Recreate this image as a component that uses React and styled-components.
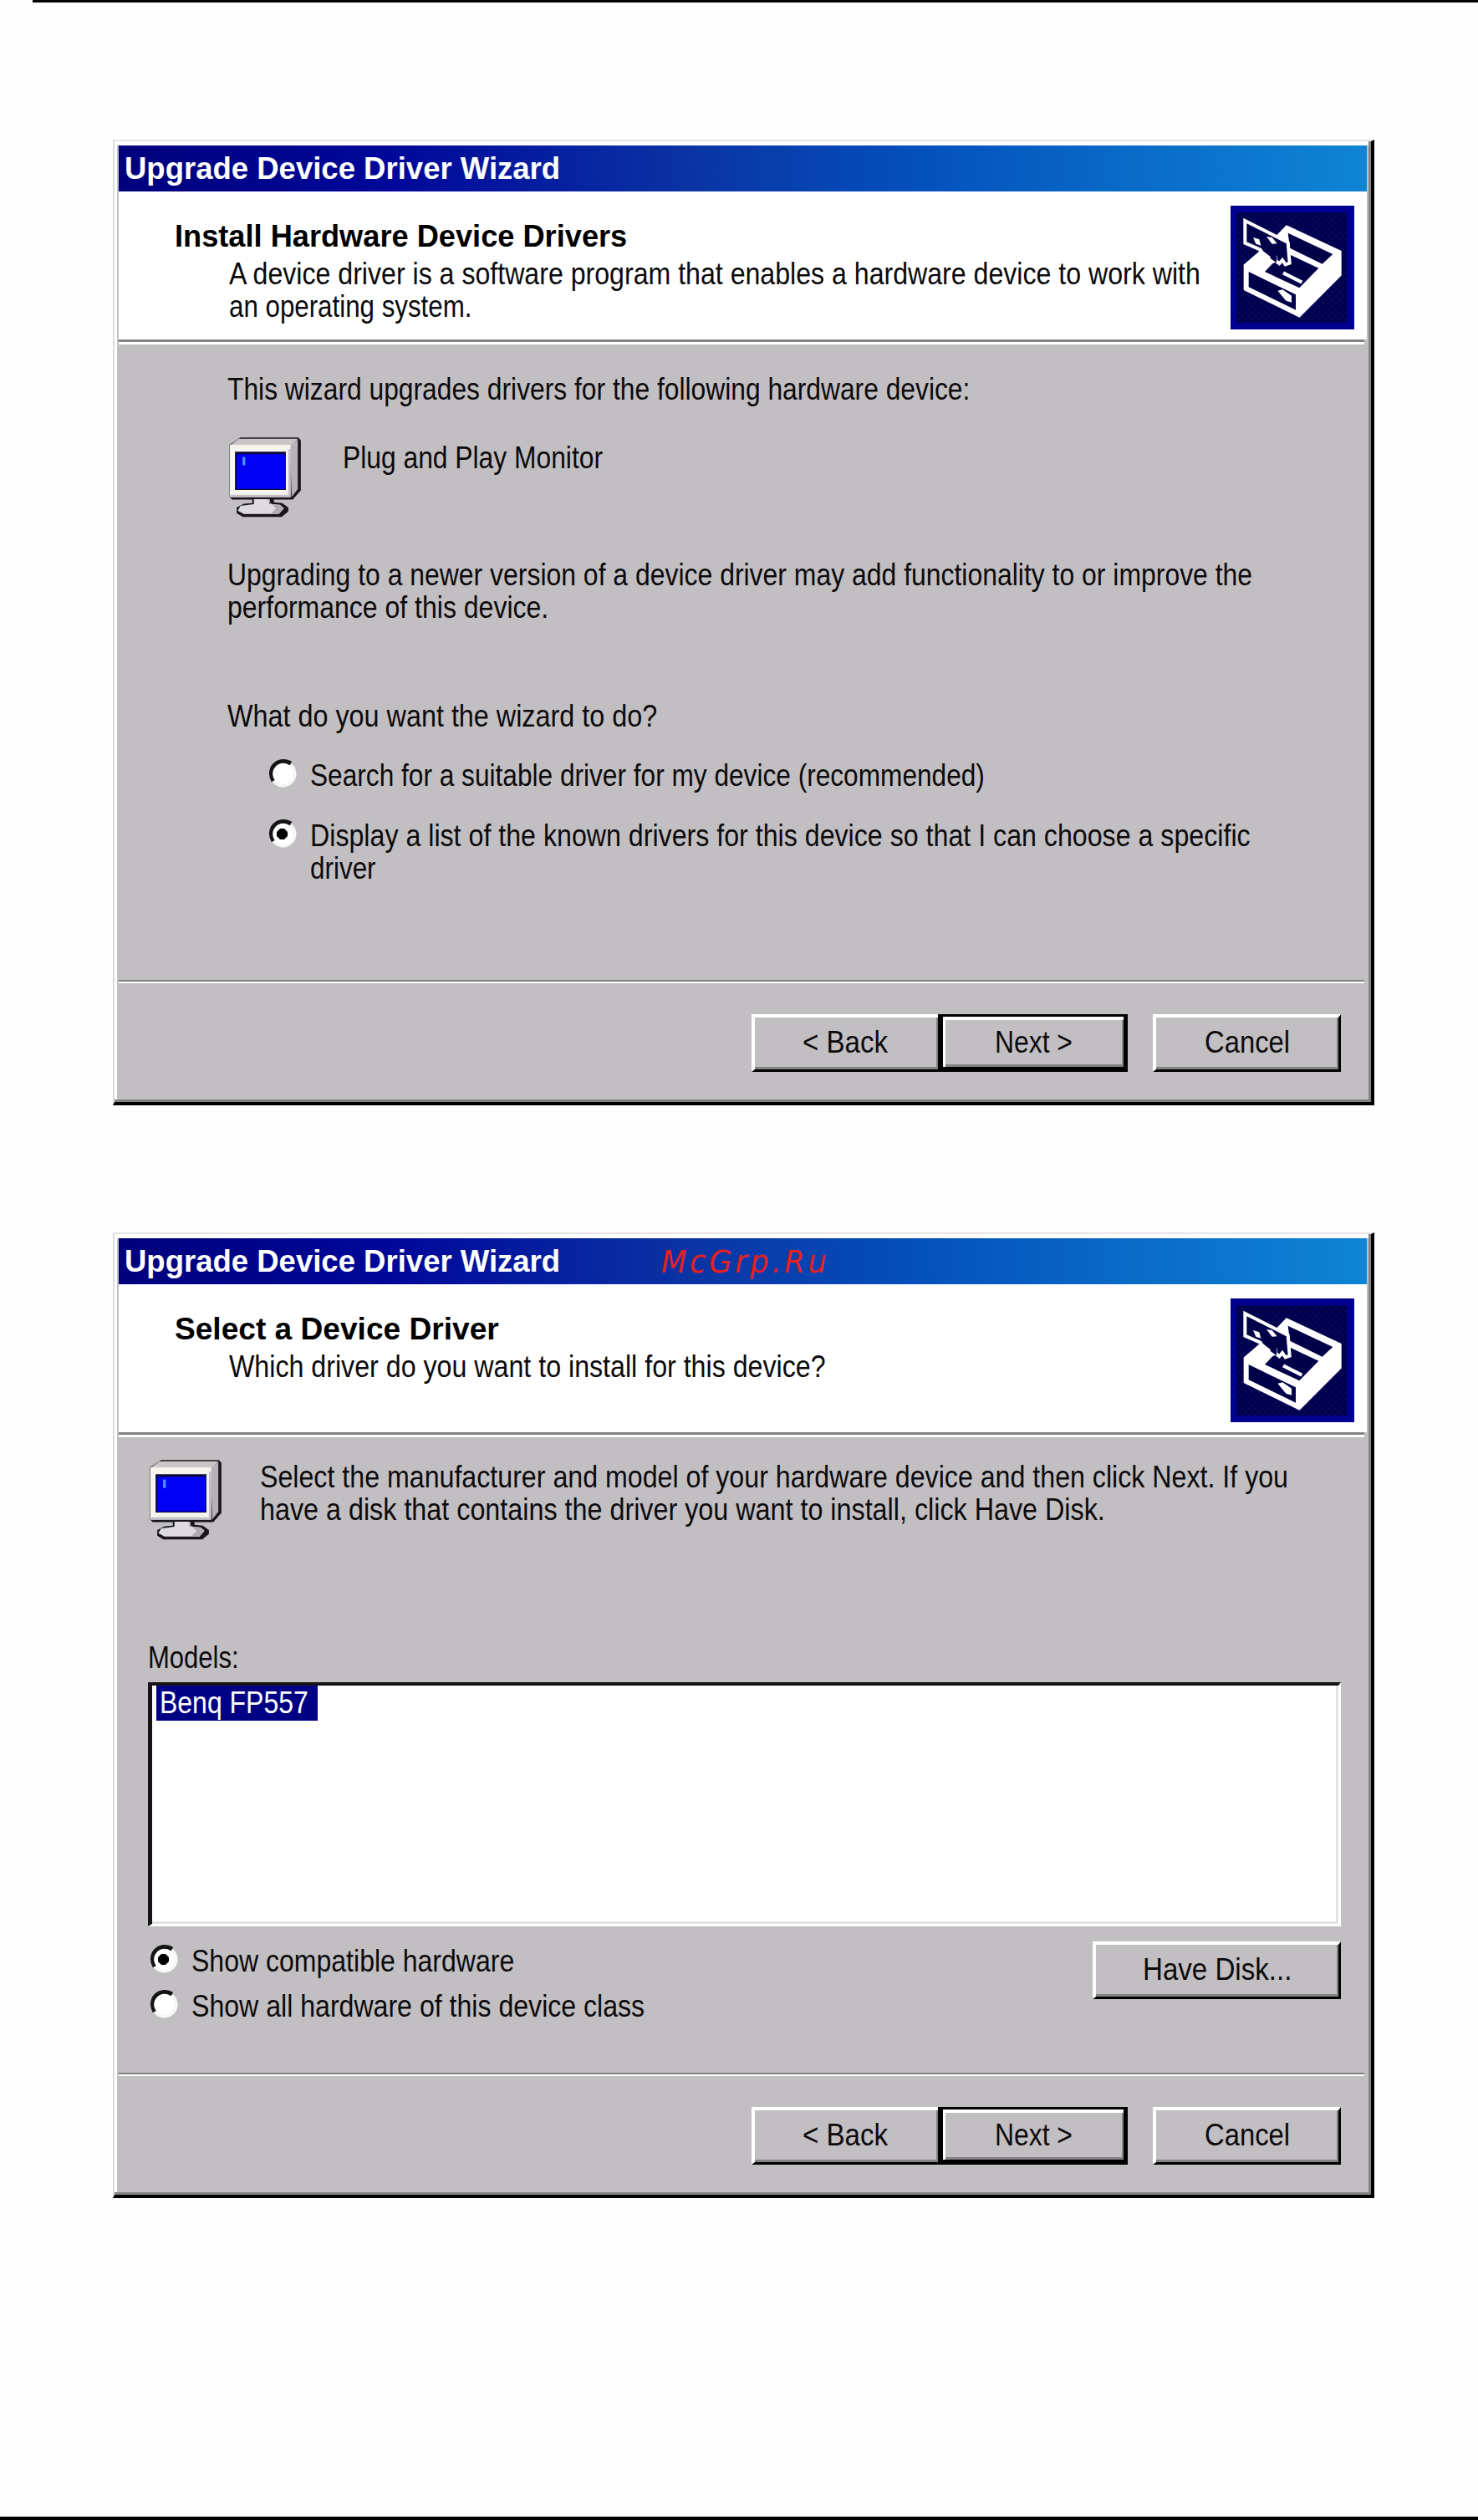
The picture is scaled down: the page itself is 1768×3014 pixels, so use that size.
import React, { useLayoutEffect, useRef, useState } from "react";
import styled, { createGlobalStyle, css } from "styled-components";

const face = "#c2bfc2";
const shade = "#858285";

const GlobalStyle = createGlobalStyle`
  html, body { margin: 0; padding: 0; background: #fefefe; }
  * { box-sizing: border-box; }
`;

const Page = styled.main`
  width: 1768px;
  height: 3014px;
  overflow: hidden;
  display: flex;
  flex-direction: column;
  color: #0c0a0c;
  font-family: "Liberation Sans", Arial, sans-serif;
  font-size: 37px;
  line-height: 39px;
`;

const TopRule = styled.div`
  height: 3px;
  margin-left: 39px;
  background: #000;
`;

const BottomRule = styled.div`
  height: 4px;
  margin-top: auto;
  background: #000;
`;

const Dialog = styled.section`
  width: 1509px;
  height: 1155px;
  margin: ${(p) => p.$gap}px 0 0 135px;
  display: flex;
  flex-direction: column;
  background: ${face};
  border-style: solid;
  border-width: 2px 4px 4px 2px;
  border-color: #e6e4e6 #000 #000 #dddbdd;
  box-shadow: inset -3px -3px 0 ${shade}, inset 3px 5px 0 #fff;
  padding: 5px 5px 3px 5px;
`;

const TitleBar = styled.header`
  height: 55px;
  padding: 8px 0 0 7px;
  display: flex;
  color: #fff;
  font-weight: bold;
  background: linear-gradient(to right, #00007c 0%, #00089a 22%, #0a34a4 46%, #0450bc 64%, #0a6cc8 82%, #0e84d4 100%);
`;

const Watermark = styled.span`
  margin: 1px 0 0 121px;
  color: #e8201f;
  font-family: "DejaVu Sans", Verdana, sans-serif;
  font-style: italic;
  font-weight: normal;
  letter-spacing: 4px;
`;

const Header = styled.div`
  height: 177px;
  display: flex;
  justify-content: space-between;
  padding: 17px 15px 0 67px;
  background: #fff;
`;

const HeaderText = styled.div`
  padding-top: 17px;
`;

const Heading = styled.div`
  font-weight: bold;
  color: #000;
  margin-bottom: 6px;
`;

const Indent = styled.div`
  padding-left: ${(p) => p.$by}px;
`;

const Divider = styled.div`
  height: ${(p) => p.$size * 2}px;
  flex: none;
  margin-right: 3px;
  border-top: ${(p) => p.$size}px solid ${shade};
  border-bottom: ${(p) => p.$size}px solid #fff;
`;

const Body = styled.div`
  height: 760px;
  flex: none;
  display: flex;
  flex-direction: column;
  padding: ${(p) => p.$pad};
`;

const Footer = styled.footer`
  display: flex;
  justify-content: flex-end;
  padding: 37px 31px 0 0;
`;

const Block = styled.div`
  margin-top: ${(p) => p.$top || 0}px;
`;

const DeviceRow = styled.div`
  display: flex;
  align-items: flex-start;
  gap: ${(p) => p.$gap}px;
  margin-top: ${(p) => p.$top || 0}px;
`;

const DeviceText = styled.div`
  padding-top: ${(p) => p.$top}px;
`;

const Option = styled.label`
  display: flex;
  align-items: flex-start;
  gap: ${(p) => p.$gap}px;
  margin-top: ${(p) => p.$top || 0}px;
`;

const SplitRow = styled.div`
  display: flex;
  justify-content: space-between;
  align-items: flex-start;
  margin-top: 18px;
`;

const Button = styled.button`
  width: ${(p) => p.$w}px;
  height: 69px;
  margin: 0 0 0 ${(p) => p.$left || 0}px;
  padding: 0 0 3px 0;
  display: flex;
  align-items: center;
  justify-content: center;
  color: inherit;
  font: inherit;
  background: ${face};
  border-radius: 0;
  border-style: solid;
  border-color: #fff #000 #000 #fff;
  border-width: 4px 3px 3px 4px;
  box-shadow: inset -2px -3px 0 ${shade};
  ${(p) =>
    p.$default &&
    css`
      padding: 0 0 0 1px;
      border-color: #000;
      border-width: 3px 5px 6px 6px;
      box-shadow: inset 3px 4px 0 #fff, inset -2px -3px 0 ${shade};
    `}
  ${(p) =>
    p.$joined &&
    css`
      padding-right: 3px;
      border-right-width: 0;
    `}
`;

const ListBox = styled.div`
  height: 292px;
  margin-top: 10px;
  padding-left: 5px;
  background: #fff;
  border-style: solid;
  border-width: 4px 3px 3px 5px;
  border-color: #151315 #fff #fff #151315;
  box-shadow: inset -3px -3px 0 #e4e2e4;
`;

const Selected = styled.div`
  width: 193px;
  height: 42px;
  padding: 1px 0 0 4px;
  color: #fff;
  background: #000084;
`;

const LineBox = styled.span`
  display: block;
  width: ${(p) => p.$w}px;
  height: 39px;
  white-space: nowrap;
`;

const Glyphs = styled.span`
  display: inline-block;
  transform-origin: 0 0;
`;

/* One line of text, condensed or widened to the given width. */
function Line({ w, children }) {
  const ref = useRef(null);
  const [scale, setScale] = useState(1);
  useLayoutEffect(() => {
    setScale(w / ref.current.offsetWidth);
  }, [w, children]);
  return (
    <LineBox $w={w}>
      <Glyphs ref={ref} style={{ transform: `scaleX(${scale})` }}>{children}</Glyphs>
    </LineBox>
  );
}

function WizardIcon() {
  return (
    <svg width="148" height="148" viewBox="97 79 444 444">
      <defs>
        <pattern id="dots" width="24" height="24" patternUnits="userSpaceOnUse">
          <rect width="24" height="24" fill="#00004c" />
          <rect x="4" y="4" width="6" height="6" fill="#0c0c70" />
          <rect x="16" y="16" width="6" height="6" fill="#0c0c70" />
        </pattern>
      </defs>
      <rect x="97" y="79" width="444" height="444" fill="#000090" />
      <rect x="118" y="104" width="396" height="396" fill="url(#dots)" />
      <path
        fill="#fff"
        stroke="#fff"
        strokeWidth="6"
        strokeLinejoin="round"
        d="M298 152 L492 243 V328 L344 477 L147 380 V292 L196 250 L262 190 Z"
      />
      <g fill="#000048">
        <path d="M303 177 L464 253 L426 288 L310 231 Z" />
        <path d="M308 254 L413 303 L344 374 L220 316 L246 288 Z" />
        <path d="M162 316 L331 398 V453 L162 371 Z" />
      </g>
      <path d="M286 320 L353 354" stroke="#fff" strokeWidth="13" />
      <path fill="#fff" d="M266 384 L284 380 L316 402 V426 L296 420 Z" />
      <path
        fill="#000048"
        stroke="#fff"
        strokeWidth="12"
        d="M149 133 L303 211 L309 285 L294 290 L283 274 L272 287 L258 276 V262 L238 252 L149 213 Z"
      />
      <path fill="#000048" d="M200 219 L238 240 L262 255 L262 284 L240 268 V262 L214 242 Z" />
      <path fill="#fff" d="M178 193 L200 200 L206 222 L188 216 Z M226 190 L246 193 L264 215 L246 216 Z" />
    </svg>
  );
}

function MonitorIcon() {
  return (
    <svg width="86" height="96" viewBox="107 69 258 289">
      <path fill="#18161c" d="M148 70 H356 L365 80 V260 L336 293 H118 L108 284 V96 Z" />
      <path fill="#b5b1b6" d="M326 96 L354 76 V256 L332 284 Z" />
      <path fill="#cbc5c8" d="M142 74 H354 L330 98 H109 Z" />
      <path fill="#f5f4ee" d="M109 96 H328 V284 H109 Z" />
      <path fill="#c4bfc8" d="M112 276 H320 V112 H328 V285 H112 Z" />
      <path fill="#0c0838" d="M128 121 H311 V259 H128 Z" />
      <path fill="#0000f4" d="M134 130 H308 V255 H134 Z" />
      <path fill="#5090ff" d="M155 140 H165 V170 H155 Z" />
      <path fill="#18161c" d="M190 290 H268 V303 L298 306 L320 322 V336 L296 356 H156 L134 342 V322 L160 308 L190 306 Z" />
      <path fill="#dddbdd" d="M196 292 H252 V308 L290 312 L304 324 L286 345 H160 L138 333 L148 316 L196 310 Z" />
      <path fill="#b0acb2" d="M244 293 H254 V308 L290 314 L304 326 L286 345 H256 L276 326 Z" />
    </svg>
  );
}

function RadioIcon({ checked }) {
  return (
    <svg width="35" height="35" viewBox="0 0 35 35">
      <circle cx="17.5" cy="17.5" r="16" fill="#f8f7f8" />
      <path d="M6 26 C-2 13 10 -4 27 5" fill="none" stroke="#151315" strokeWidth="5" />
      <circle cx="17.5" cy="17.5" r="12.3" fill="#fff" />
      {checked && <path fill="#000" d="M14 11 H19 L23 15 V20 L19 24 H14 L10 20 V15 Z" />}
    </svg>
  );
}

function Wizard({ gap, watermark, heading, description, pad, children }) {
  return (
    <Dialog $gap={gap}>
      <TitleBar>
        <Line w={521}>Upgrade Device Driver Wizard</Line>
        {watermark && <Watermark><Line w={202}>{watermark}</Line></Watermark>}
      </TitleBar>
      <Header>
        <HeaderText>
          <Heading><Line w={heading.w}>{heading.text}</Line></Heading>
          <Indent $by={65}>
            {description.map((d) => <Line key={d.text} w={d.w}>{d.text}</Line>)}
          </Indent>
        </HeaderText>
        <WizardIcon />
      </Header>
      <Divider $size={3} />
      <Body $pad={pad}>{children}</Body>
      <Divider $size={2} />
      <Footer>
        <Button $w={223} $joined><Line w={102}>&lt; Back</Line></Button>
        <Button $w={227} $default><Line w={93}>Next &gt;</Line></Button>
        <Button $w={225} $left={30}><Line w={102}>Cancel</Line></Button>
      </Footer>
    </Dialog>
  );
}

export default function App() {
  return (
    <Page>
      <GlobalStyle />
      <TopRule />
      <Wizard
        gap={164}
        pad="34px 0 0 130px"
        heading={{ text: "Install Hardware Device Drivers", w: 541 }}
        description={[
          { text: "A device driver is a software program that enables a hardware device to work with", w: 1162 },
          { text: "an operating system.", w: 290 },
        ]}
      >
        <Line w={888}>This wizard upgrades drivers for the following hardware device:</Line>
        <DeviceRow $top={38} $gap={50}>
          <Indent $by={2}><MonitorIcon /></Indent>
          <DeviceText $top={5}><Line w={311}>Plug and Play Monitor</Line></DeviceText>
        </DeviceRow>
        <Block $top={42}>
          <Line w={1226}>Upgrading to a newer version of a device driver may add functionality to or improve the</Line>
          <Line w={384}>performance of this device.</Line>
        </Block>
        <Block $top={91}>
          <Line w={514}>What do you want the wizard to do?</Line>
        </Block>
        <Indent $by={49}>
          <Option $top={32} $gap={15}>
            <RadioIcon />
            <Line w={807}>Search for a suitable driver for my device (recommended)</Line>
          </Option>
          <Option $top={33} $gap={15}>
            <RadioIcon checked />
            <div>
              <Line w={1125}>Display a list of the known drivers for this device so that I can choose a specific</Line>
              <Line w={79}>driver</Line>
            </div>
          </Option>
        </Indent>
      </Wizard>
      <Wizard
        gap={152}
        watermark="McGrp.Ru"
        pad="27px 31px 0 35px"
        heading={{ text: "Select a Device Driver", w: 388 }}
        description={[{ text: "Which driver do you want to install for this device?", w: 714 }]}
      >
        <DeviceRow $gap={46}>
          <Indent $by={2}><MonitorIcon /></Indent>
          <DeviceText $top={1}>
            <Line w={1230}>Select the manufacturer and model of your hardware device and then click Next. If you</Line>
            <Line w={1011}>have a disk that contains the driver you want to install, click Have Disk.</Line>
          </DeviceText>
        </DeviceRow>
        <Block $top={114}><Line w={109}>Models:</Line></Block>
        <ListBox>
          <Selected><Line w={178}>Benq FP557</Line></Selected>
        </ListBox>
        <SplitRow>
          <Indent $by={2}>
            <Option $top={4} $gap={15}>
              <RadioIcon checked />
              <Line w={386}>Show compatible hardware</Line>
            </Option>
            <Option $top={15} $gap={15}>
              <RadioIcon />
              <Line w={542}>Show all hardware of this device class</Line>
            </Option>
          </Indent>
          <Button $w={297}><Line w={178}>Have Disk...</Line></Button>
        </SplitRow>
      </Wizard>
      <BottomRule />
    </Page>
  );
}
